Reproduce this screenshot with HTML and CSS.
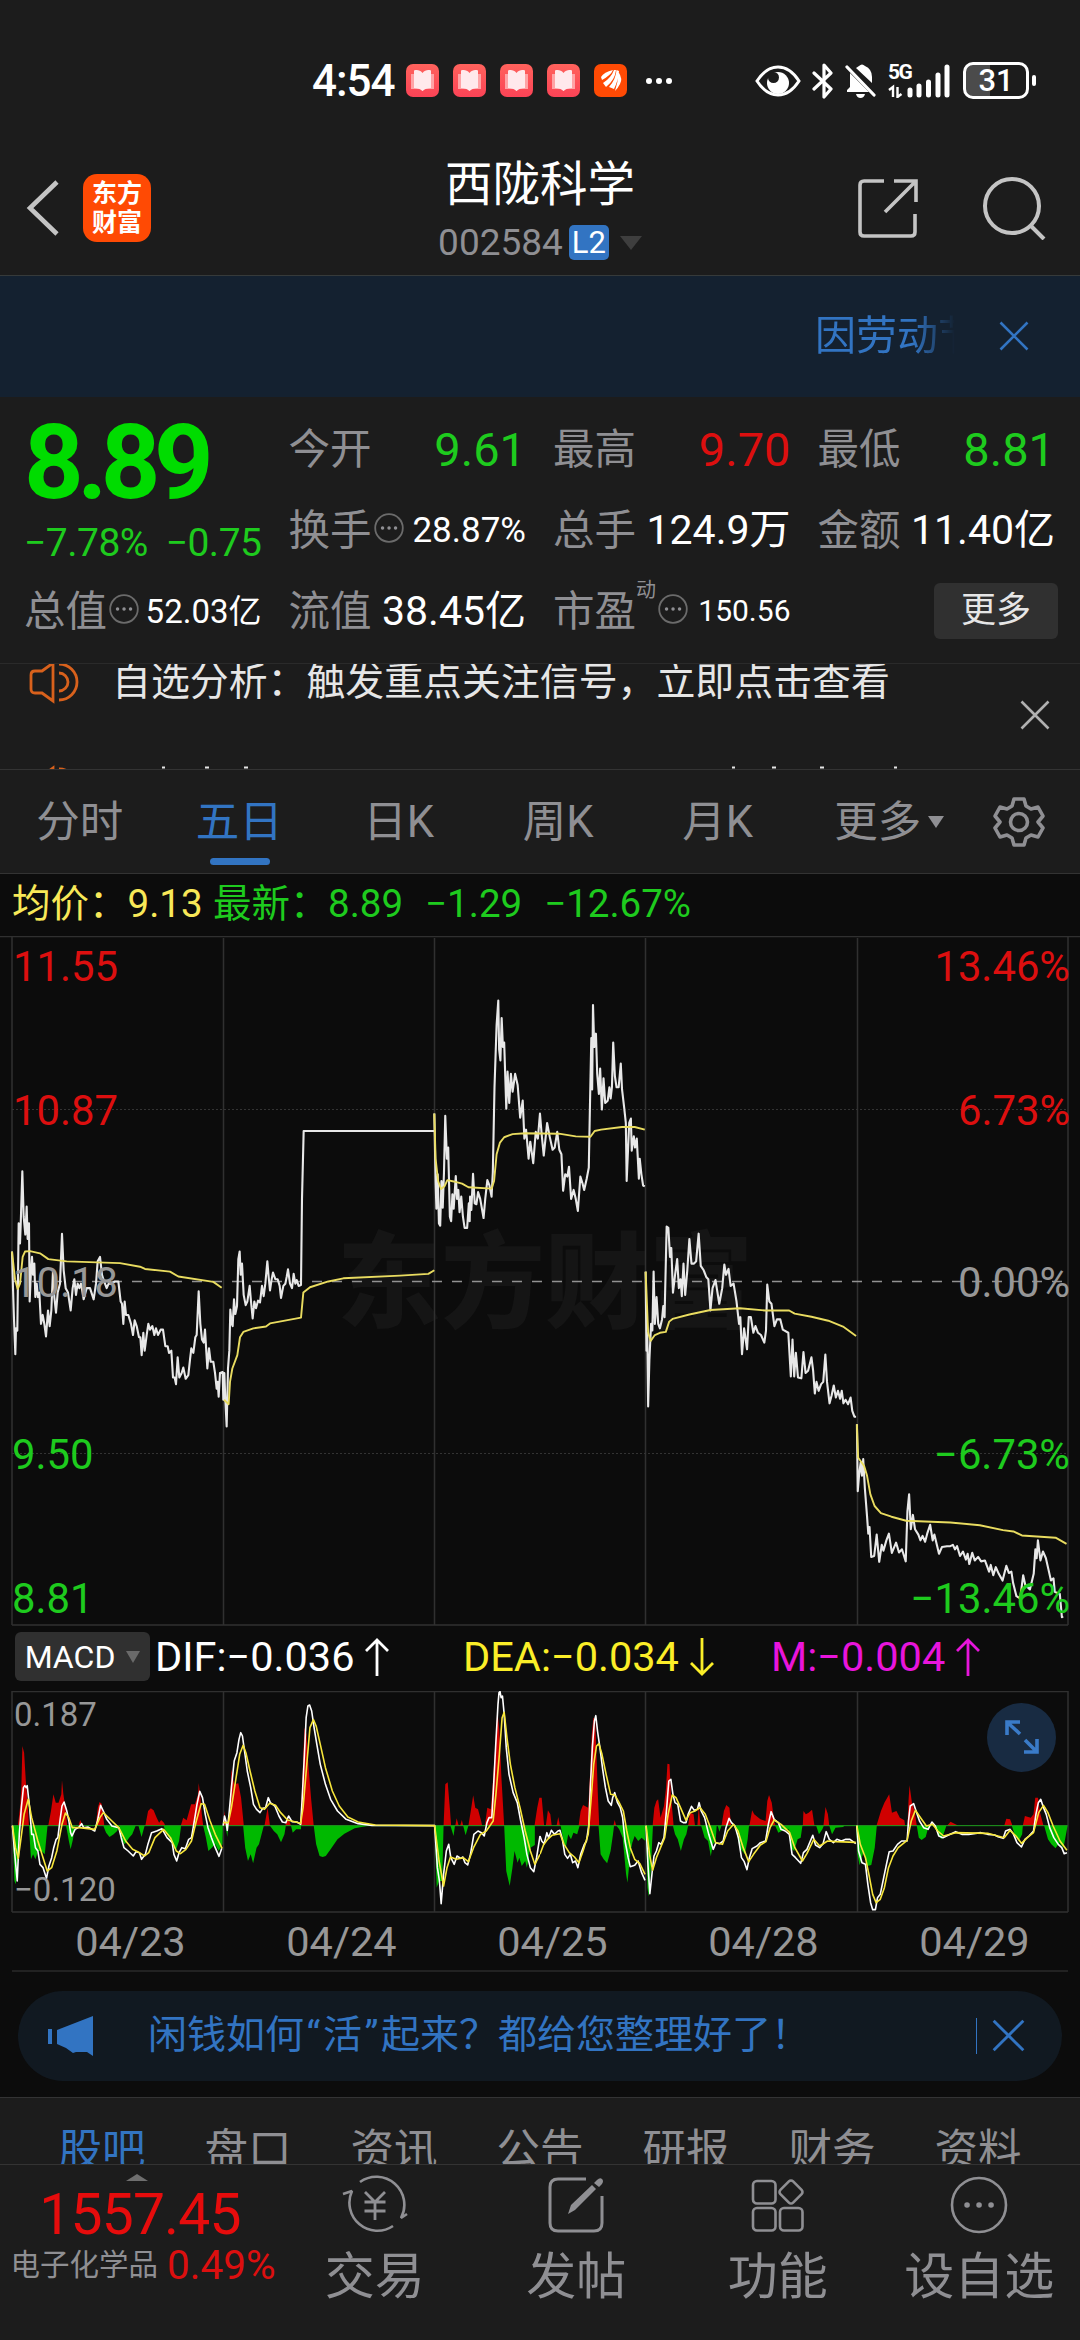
FILE: index.html
```html
<!DOCTYPE html>
<html lang="zh-CN">
<head>
  <meta charset="UTF-8">
  <meta name="viewport" content="width=device-width, initial-scale=1.0">
  <title>西陇科学 002584</title>
  <link rel="stylesheet" href="styles.css">
</head>
<body>
  <svg width="0" height="0" class="defs">
    <defs>
      <linearGradient id="book-bg" x1="0" y1="0" x2="0" y2="1">
        <stop offset="0" stop-color="#ff625c"/>
        <stop offset="1" stop-color="#fb4356"/>
      </linearGradient>
      <symbol id="book" viewBox="0 0 33 33">
        <rect width="33" height="33" rx="7" fill="url(#book-bg)"/>
        <path d="M5 10h23v15h-9l-2.500 2-2.500-2H5z" fill="#ffa3a6"/>
        <path d="M8 6.500c3-1 6-.5 8.500 2.500 2.500-3 5.500-3.500 8.500-2.500V24c-3.500 0-6 .8-8.500 3-2.500-2.200-5-3-8.500-3z" fill="#ffe9ec"/>
      </symbol>
      <symbol id="close" viewBox="0 0 30 30">
        <path d="M1.500 1.500l27 27M28.500 1.500l-27 27" fill="none" stroke="currentColor" stroke-width="2.600"/>
      </symbol>
      <symbol id="info" viewBox="0 0 30 30">
        <circle cx="15" cy="15" r="13.800" fill="none" stroke="#6b6b6b" stroke-width="1.800"/>
        <path d="M8.500 15h.1M15 15h.1M21.500 15h.1" stroke="#8f8f93" stroke-width="3.400" stroke-linecap="round"/>
      </symbol>
      <symbol id="speaker" viewBox="0 0 52 44">
        <path d="M3 15q0-4 4-4h7L25 3v38L14 33H7q-4 0-4-4zM31 4a18 18 0 0 1 0 36M31 13a9 9 0 0 1 0 18" fill="none" stroke="#d8611c" stroke-width="2.800"/>
      </symbol>
      <symbol id="arrow-up" viewBox="0 0 24 38">
        <path d="M12 38V2M1 13L12 2l11 11" fill="none" stroke="currentColor" stroke-width="2.800"/>
      </symbol>
    </defs>
  </svg>

  <div class="status-bar">
    <div class="status-left">
      <span class="clock">4:54</span>
      <svg class="app-icon"><use href="#book"/></svg>
      <svg class="app-icon"><use href="#book"/></svg>
      <svg class="app-icon"><use href="#book"/></svg>
      <svg class="app-icon"><use href="#book"/></svg>
      <svg class="app-icon" viewBox="0 0 33 33">
        <rect width="33" height="33" rx="7" fill="#ff4a04"/>
        <path d="M7 13Q10 8 19 6Q17 11 8 16zM9 19Q17 14 20 6L22 6Q21 16 12 23zM15 23Q22 15 22.500 6L25 7Q24 17 20 25zM21 27Q24 18 24.500 8Q29 15 26 20Q24 24 21 27z" fill="#fff"/>
      </svg>
      <span class="dots"><i></i><i></i><i></i></span>
    </div>
    <div class="status-right">
      <svg width="46" height="32" viewBox="0 0 46 32">
        <path d="M2 16Q11 2 23 2t21 14Q35 30 23 30T2 16z" fill="none" stroke="#fff" stroke-width="3"/>
        <circle cx="23" cy="18" r="11" fill="#fff"/>
        <circle cx="18.500" cy="12.500" r="5.500" fill="#1c1c1c"/>
      </svg>
      <svg width="22" height="36" viewBox="0 0 22 36">
        <path d="M2 10l17 16-7 8V2l7 8L2 26" fill="none" stroke="#fff" stroke-width="3.200" stroke-linejoin="round" stroke-linecap="round"/>
      </svg>
      <svg width="32" height="36" viewBox="0 0 32 36">
        <path d="M14 3Q17 0 20 3Q27 6 27 14V20L11 5zM5 10L24 29H2V27L5 24zM11 31h9q-1 4-4.500 4T11 31z" fill="#fff"/>
        <path d="M2 4l27 28" stroke="#fff" stroke-width="3.200" stroke-linecap="round"/>
      </svg>
      <div class="signal">
        <span>5G</span>
        <svg width="62" height="34" viewBox="0 0 62 34">
          <path d="M5 33V23l-4 3M9.500 23v10l4-3" fill="none" stroke="#fff" stroke-width="2.400"/>
          <path d="M22 26v5M31 22v9M40.500 18v13M50 11v20M59 3v28" stroke="#fff" stroke-width="5" stroke-linecap="round"/>
        </svg>
      </div>
      <div class="battery"><span>31</span></div>
    </div>
  </div>

  <div class="header">
    <div class="header-left">
      <svg width="34" height="56" viewBox="0 0 34 56"><path d="M31 2L4 28l27 26" fill="none" stroke="#c4c4c4" stroke-width="4.600"/></svg>
      <div class="logo">东方<br>财富</div>
    </div>
    <div class="header-title">
      <h1>西陇科学</h1>
      <div class="code">002584<span class="level">L2</span><span class="tri-down"></span></div>
    </div>
    <div class="header-right">
      <svg width="60" height="60" viewBox="0 0 60 60">
        <path d="M26 3H6q-4 0-4 4v47q0 4 4 4h47q4 0 4-4V36M36 3h22v21M58 3L27 34" fill="none" stroke="#c4c4c4" stroke-width="3.600"/>
      </svg>
      <svg width="64" height="64" viewBox="0 0 64 64">
        <circle cx="30" cy="30" r="27" fill="none" stroke="#c4c4c4" stroke-width="4"/>
        <path d="M49 50l13 13" stroke="#c4c4c4" stroke-width="4"/>
      </svg>
    </div>
  </div>

  <div class="notice">
    <div class="notice-text">因劳动节</div>
    <svg class="close"><use href="#close"/></svg>
  </div>

  <div class="quote">
    <div class="price-box">
      <div class="price">8.89</div>
      <div class="change"><span>−7.78%</span><span>−0.75</span></div>
    </div>
    <div class="cell"><label>今开</label><b class="down">9.61</b></div>
    <div class="cell"><label>最高</label><b class="up">9.70</b></div>
    <div class="cell"><label>最低</label><b class="down">8.81</b></div>
    <div class="cell"><label>换手</label><svg class="info"><use href="#info"/></svg><b class="s35">28.87%</b></div>
    <div class="cell"><label>总手</label><b class="s41">124.9万</b></div>
    <div class="cell"><label>金额</label><b class="s41">11.40亿</b></div>
    <div class="cell"><label>总值</label><svg class="info"><use href="#info"/></svg><b class="s33">52.03亿</b></div>
    <div class="cell"><label>流值</label><b class="s41">38.45亿</b></div>
    <div class="cell"><label>市盈</label><sup>动</sup><svg class="info"><use href="#info"/></svg><b class="s30">150.56</b></div>
    <div class="cell cell-more"><button>更多</button></div>
  </div>

  <div class="news">
    <div class="news-list">
      <div class="news-item"><svg class="speaker"><use href="#speaker"/></svg>自选分析：触发重点关注信号，立即点击查看</div>
      <div class="news-item">
        <svg class="speaker"><use href="#speaker"/></svg>
        <svg width="800" height="44" viewBox="0 0 800 44"><path d="M50 2.500h3M93 2.500h4M132 2.500h4M620 2.500h3M660 2.500h4M708 2.500h4M782 2.500h3" stroke="#e6e6e6" stroke-width="2"/></svg>
      </div>
    </div>
    <svg class="close"><use href="#close"/></svg>
  </div>

  <div class="tabs">
    <span>分时</span>
    <span class="active">五日</span>
    <span>日K</span>
    <span>周K</span>
    <span>月K</span>
    <span class="more">更多<i class="tri-down"></i></span>
    <svg width="52" height="52" viewBox="0 0 52 52">
      <path d="M21 3h10l2 7 5 3 7-2 5 9-5 6 5 6-5 9-7-2-5 3-2 7H21l-2-7-5-3-7 2-5-9 5-6-5-6 5-9 7 2 5-3z" fill="none" stroke="#8f8f93" stroke-width="3.600" stroke-linejoin="round"/>
      <circle cx="26" cy="26" r="8.500" fill="none" stroke="#8f8f93" stroke-width="3.600"/>
    </svg>
  </div>

  <div class="chart-area">
    <div class="legend">
      <span class="avg">均价：9.13</span>
      <span class="last">最新：</span><span>8.89</span><span>−1.29</span><span>−12.67%</span>
    </div>

    <svg class="price-chart" width="1080" height="690" viewBox="0 0 1080 690">
      <text class="watermark" x="545" y="384" text-anchor="middle">东方财富</text>
      <path class="grid" d="M0 .5H1080M12 0V689M223.500 2V689M434.500 2V689M645.500 2V689M857.500 2V689M1068 0V689M12 689H1068"/>
      <path class="grid-dot" d="M12 173.500H1068M12 517.500H1068"/>
      <path class="grid-zero" d="M12 345.500H1068"/>

      <!-- 04/23, 04/24 -->
      <svg x="0" y="-5" width="440" height="700" viewBox="0 0 1320 1568" preserveAspectRatio="none">
        <path class="line-price" d="M36,718 39,800 42,870 46,948 48,890 52,895 56,655 60,700 62,660 67,538 71,640 76,680 80,617 83,690 87,655 89,830 93,760 96,730 99,770 103,745 106,820 110,790 114,820 118,810 123,880 128,860 133,880 138,908 144,850 149,885 154,850 159,760 163,820 168,855 173,810 180,790 186,678 191,760 197,800 204,810 212,850 218,800 223,780 228,815 233,790 238,800 243,790 251,825 260,800 270,800 281,825 288,790 293,740 300,730 306,770 310,780 315,790 320,800 326,790 335,790 345,785 355,785 362,830 366,835 370,880 374,830 378,860 385,860 393,880 399,905 404,872 410,885 417,910 421,910 425,950 430,900 434,940 440,905 445,880 450,893 457,885 463,905 468,890 474,905 482,893 489,893 496,930 503,930 507,945 514,940 519,1000 524,1000 528,1015 533,955 538,1000 545,990 550,978 557,1003 565,995 570,960 574,935 580,945 586,910 590,905 596,807 601,880 606,915 611,922 615,893 622,980 627,935 632,965 640,965 645,990 650,1025 653,1010 656,1043 660,990 668,988 670,1050 673,990 676,1050 680,1110 684,980 688,940 691,848 695,880 698,885 702,825 706,858 711,840 715,735 719,718 722,770 726,745 731,815 737,838 742,830 749,795 753,830 758,868 763,830 768,845 774,828 780,832 786,795 791,818 796,790 802,740 806,775 810,805 815,780 819,765 826,780 833,780 839,795 843,822 850,795 856,790 860,775 864,758 870,790 876,800 881,768 886,790 890,782 896,795 903,793 906,600 911,448 1303,448"/>
        <path class="line-avg" d="M36,718 45,780 53,802 60,790 64,760 68,730 75,718 90,717 120,722 145,735 200,740 360,744 420,752 435,757 510,763 535,774 640,786 665,799M672,1050 686,1060 690,1010 697,980 712,950 720,910 730,898 760,890 798,886 810,879 903,866 910,810 930,798 985,785 1030,778 1200,772 1285,768 1303,760"/>
      </svg>
      <!-- 04/25, 04/28, 04/29 -->
      <svg x="420" y="-5" width="660" height="700" viewBox="0 0 1568 1568" preserveAspectRatio="none">
        <path class="line-price" d="M34,409 37,560 39,622 42,545 45,655 48,660 51,560 54,620 57,540 60,414 64,510 67,485 71,640 74,650 77,590 80,622 85,549 88,600 91,580 94,630 98,595 102,640 106,665 112,665 116,610 118,650 119,595 122,625 126,544 130,610 134,612 138,585 143,600 151,643 155,600 160,558 165,570 170,595 173,540 177,350 182,210 186,156 188,265 191,290 194,195 197,260 200,250 205,398 208,315 212,385 216,320 220,360 226,320 232,345 238,418 244,380 248,465 252,445 258,510 262,472 269,520 275,450 280,465 285,409 289,455 294,503 302,430 308,460 315,490 320,485 326,450 331,490 336,500 340,582 345,545 350,550 354,528 359,600 365,580 370,600 375,627 381,550 386,565 390,580 396,555 401,530 404,380 407,240 409,355 411,166 414,260 418,230 421,320 425,365 428,308 432,400 436,330 440,385 446,380 450,350 453,375 456,350 459,250 463,325 467,350 472,350 477,297 480,355 485,395 489,430 491,560 497,430 501,420 503,492 508,460 511,485 515,465 520,555 522,510 526,545 530,570 534,572"/>
        <path class="line-avg" d="M34,409 37,510 43,560 50,578 58,572 65,558 80,561 100,566 115,574 170,577 176,560 182,500 190,474 200,462 220,455 250,453 330,454 370,460 405,461 415,448 430,445 480,439 510,439 534,445"/>
        <path class="line-price" d="M536,763 538,940 540,900 542,1065 545,960 549,880 552,895 555,763 558,880 562,820 566,880 570,890 575,870 578,840 581,865 586,662 590,665 594,730 597,710 601,810 606,770 611,735 615,800 619,780 622,818 626,745 630,815 635,760 640,690 645,745 651,745 656,740 662,678 667,750 674,760 680,775 685,780 690,850 695,800 702,782 711,835 718,800 723,747 727,770 733,757 738,795 745,790 752,830 758,880 761,865 765,948 770,890 777,937 781,865 786,865 792,900 797,885 803,900 810,905 818,922 822,895 825,792 830,830 835,835 842,885 848,870 856,870 862,893 875,900 881,998 885,915 889,998 893,945 898,1000 906,1002 911,943 916,990 922,985 930,955 934,985 938,1036 942,1010 947,1030 953,1015 958,1010 963,949 967,1010 973,1058 978,1040 983,1018 988,1045 993,1030 998,1048 1002,1030 1006,1058 1011,1050 1017,1060 1023,1045 1027,1075 1032,1088 1036,1088"/>
        <path class="line-avg" d="M536,763 542,900 548,918 558,905 570,900 584,898 592,875 600,869 640,859 690,849 760,845 820,850 877,850 890,857 930,864 970,873 1005,886 1036,907"/>
        <path class="line-price" d="M1038,1105 1040,1255 1043,1220 1047,1190 1050,1220 1053,1183 1057,1250 1062,1310 1065,1350 1068,1335 1072,1402 1079,1400 1085,1352 1091,1413 1097,1375 1101,1388 1108,1365 1114,1350 1121,1393 1131,1370 1138,1392 1145,1385 1154,1412 1158,1300 1162,1262 1166,1340 1171,1308 1176,1340 1184,1352 1189,1365 1194,1355 1200,1368 1205,1350 1212,1330 1218,1365 1222,1352 1233,1395 1240,1380 1252,1378 1260,1378 1266,1375 1271,1385 1276,1378 1283,1400 1290,1390 1297,1408 1301,1395 1305,1418 1312,1393 1318,1410 1326,1402 1333,1412 1342,1410 1352,1435 1356,1420 1362,1443 1368,1425 1375,1440 1384,1455 1393,1422 1399,1438 1405,1435 1409,1460 1417,1490 1426,1495 1433,1443 1438,1465 1449,1475 1458,1440 1462,1385 1465,1405 1468,1365 1474,1410 1480,1390 1487,1405 1493,1430 1499,1455 1505,1450 1508,1480 1520,1485 1525,1537 1528,1535"/>
        <path class="line-avg" d="M1038,1105 1041,1180 1045,1185 1055,1198 1062,1220 1070,1262 1080,1288 1095,1304 1120,1312 1155,1321 1260,1325 1330,1331 1385,1342 1410,1345 1430,1354 1510,1359 1536,1373"/>
      </svg>

      <g class="axis">
        <text class="up" x="13" y="45">11.55</text>
        <text class="up" x="13" y="189">10.87</text>
        <text class="flat" x="13" y="361">10.18</text>
        <text class="down" x="12" y="533">9.50</text>
        <text class="down" x="12" y="677">8.81</text>
      </g>
      <g class="axis" text-anchor="end">
        <text class="up" x="1070" y="45">13.46%</text>
        <text class="up" x="1070" y="189">6.73%</text>
        <text class="flat" x="1070" y="361">0.00%</text>
        <text class="down" x="1070" y="533">−6.73%</text>
        <text class="down" x="1070" y="677">−13.46%</text>
      </g>
    </svg>

    <div class="macd-head">
      <button>MACD<i class="tri-down"></i></button>
      <span class="dif">DIF:−0.036<svg class="arrow"><use href="#arrow-up"/></svg></span>
      <span class="dea">DEA:−0.034<svg class="arrow arrow-down"><use href="#arrow-up"/></svg></span>
      <span class="m">M:−0.004<svg class="arrow"><use href="#arrow-up"/></svg></span>
    </div>

    <div class="macd-chart">
      <svg width="1080" height="222" viewBox="0 0 1080 222">
        <path class="grid" d="M12 .5H1068M12 0V221M223.500 0V221M434.500 0V221M645.500 0V221M857.500 0V221M1068 0V221M12 221H1068"/>
        <svg x="0" y="-70" width="540" height="370" viewBox="0 0 1568 1110" preserveAspectRatio="none">
          <path class="bar-up" d="M52,614 58,560 62,500 65,375 70,395 75,480 80,540 84,614zM140,614 148,570 155,520 162,545 170,545 178,520 180,478 184,520 190,560 195,614zM228,614 233,597 240,614zM278,614 284,560 289,543 295,548 299,580 303,614zM422,614 430,570 438,562 446,568 455,590 462,605 468,597 476,605 480,614zM525,614 532,590 542,598 555,550 566,550 575,520 577,486 581,520 586,580 590,614zM648,614 652,570 656,614zM663,614 668,540 672,445 680,490 692,487 700,530 708,614zM768,614 777,560 784,614zM828,614 836,590 845,614zM872,614 878,480 884,320 890,340 896,440 904,540 911,614zM1288,614 1293,490 1300,484 1306,560 1310,614zM1322,614 1326,592 1332,614zM1336,614 1341,597 1345,614zM1360,614 1367,570 1374,523 1380,560 1388,565 1397,600 1400,614zM1408,614 1415,560 1425,565 1430,500 1438,380 1444,265 1450,330 1456,470 1464,614zM1552,614 1560,560 1566,530 1568,530 1568,614z"/>
          <path class="bar-down" d="M36,614 42,780 46,790 52,700 56,614zM84,614 90,715 96,700 103,715 110,690 120,690 130,700 138,614zM192,614 200,660 205,685 212,655 217,614zM300,614 308,635 318,648 330,640 340,630 346,614zM346,614 352,650 362,670 375,650 384,640 394,614zM402,614 411,648 420,614zM475,614 484,640 497,660 510,690 520,660 526,614zM590,614 598,650 605,690 615,680 625,670 635,690 646,670 647,614zM655,614 660,648 663,614zM706,614 712,680 720,720 728,700 735,727 745,680 752,670 766,614zM784,614 795,630 805,640 816,664 826,640 830,614zM845,614 850,635 860,625 874,625 874,614zM911,614 918,670 928,705 937,708 946,705 960,685 980,655 1000,638 1030,622 1070,614zM1262,614 1268,800 1275,780 1284,780 1288,614zM1308,614 1317,645 1321,614zM1345,614 1352,643 1360,614zM1464,614 1470,750 1480,795 1488,740 1494,690 1503,725 1508,710 1515,735 1525,720 1530,740 1540,680 1553,672 1553,614z"/>
          <path class="bar-zero" d="M36 614H1568"/>
          <path class="line-dif" d="M36,614 42,690 50,780 56,640 62,560 68,500 72,494 76,500 79,494 86,560 92,640 97,640 103,680 110,690 116,730 125,740 135,772 142,735 150,710 156,680 163,655 168,650 174,600 180,555 186,543 194,570 200,600 205,635 209,645 218,625 230,618 237,608 243,620 255,618 275,630 283,600 292,553 300,570 310,595 325,615 345,620 352,650 360,680 372,690 387,705 395,692 405,695 411,715 422,700 430,668 440,635 455,630 470,623 485,650 500,665 505,700 513,720 520,695 528,680 538,683 548,655 556,650 565,595 572,550 580,511 588,530 596,580 604,620 614,650 625,680 636,706 644,682M648,614 652,585 656,600 660,628 665,580 672,500 680,420 688,395 694,355 699,335 704,345 710,390 718,450 728,500 736,550 745,565 755,575 763,562 771,560 779,530 785,545 798,555 810,585 820,603 830,605 838,585 848,602 862,603 873,610 877,540 884,400 889,290 894,255 899,252 905,270 912,320 920,370 930,430 945,490 960,535 980,570 1005,595 1040,608 1080,613 1262,614 1270,740 1276,780 1281,848 1288,760 1296,690 1303,670 1309,710 1319,730 1327,705 1338,712 1344,708 1350,725 1358,732 1366,700 1376,640 1388,630 1398,635 1406,645 1414,605 1420,590 1428,590 1433,500 1439,380 1446,250 1449,215 1452,212 1455,230 1459,225 1464,280 1470,380 1478,460 1490,515 1502,545 1512,600 1522,650 1530,700 1540,740 1550,752 1558,710 1568,645"/>
          <path class="line-dea" d="M36,614 45,680 53,712 60,660 70,580 82,535 92,590 110,660 125,710 137,750 150,740 165,690 180,610 190,576 200,590 210,620 230,620 275,625 290,590 300,575 325,600 345,620 365,660 385,685 400,692 420,705 432,695 450,650 475,625 495,650 512,690 524,698 540,685 556,660 570,600 584,548 594,550 610,600 625,640 645,682M648,605 663,605 672,560 684,480 696,400 706,373 714,395 726,450 740,510 755,560 768,565 783,547 800,553 815,575 835,597 873,607 880,560 890,440 900,320 910,296 918,315 930,370 945,440 965,510 985,555 1010,588 1040,603 1090,612 1262,614 1275,720 1288,795 1298,740 1308,708 1325,715 1345,710 1360,722 1375,680 1395,640 1412,630 1432,600 1440,520 1450,400 1458,290 1464,274 1472,350 1482,430 1495,500 1510,560 1525,630 1540,690 1553,730 1568,700"/>
        </svg>
        <svg x="540" y="-70" width="540" height="370" viewBox="0 0 1568 1110" preserveAspectRatio="none">
          <path class="bar-up" d="M0,614 0,530 5,530 10,590 12,614zM17,614 23,568 30,580 34,614zM48,614 53,588 58,614zM112,614 118,570 125,552 140,560 146,450 150,345 155,290 160,295 164,400 168,520 172,614zM213,614 217,597 221,614zM327,614 332,560 338,540 343,535 350,590 360,555 366,500 370,428 376,430 380,520 388,614zM430,614 436,575 446,580 450,614zM457,614 461,555 466,614zM527,614 534,570 541,552 550,560 555,614zM608,614 616,568 622,580 640,595 655,600 660,540 665,522 673,545 680,600 684,614zM763,614 765,570 772,580 780,575 790,566 797,614zM823,614 829,558 836,580 840,614zM977,614 990,570 1000,545 1014,520 1022,575 1035,570 1045,590 1058,598 1060,614zM1067,614 1070,540 1073,493 1080,545 1088,570 1094,614zM1132,614 1138,603 1148,614zM1182,614 1192,602 1215,614zM1348,614 1354,593 1365,595 1372,614zM1402,614 1408,585 1425,590 1433,580 1438,530 1446,530 1452,575 1462,614z"/>
          <path class="bar-down" d="M60,614 68,660 75,680 82,640 90,655 97,635 108,640 115,614zM170,614 176,700 185,715 195,727 205,690 212,640 215,614zM222,614 230,625 240,650 250,760 254,785 262,700 268,665 275,645 285,660 295,650 306,660 306,614zM308,614 312,800 316,827 322,740 328,614zM386,614 392,640 400,655 409,690 418,655 425,640 430,614zM468,614 478,650 488,660 496,706 502,670 510,660 513,614zM516,614 521,632 527,614zM562,614 570,630 580,680 595,700 603,655 607,614zM683,614 692,635 705,628 722,625 728,680 738,690 748,655 757,650 762,614zM802,614 810,640 820,625 824,614zM840,614 848,640 858,620 880,618 884,614zM918,614 922,700 928,733 940,690 950,735 962,732 972,680 978,614zM1094,614 1100,650 1108,657 1120,648 1126,625 1132,614zM1148,614 1155,640 1166,655 1175,630 1180,614zM1370,614 1378,640 1390,660 1400,640 1402,614zM1464,614 1475,655 1485,670 1497,682 1508,665 1520,680 1532,614z"/>
          <path class="bar-zero" d="M0 614H1532"/>
          <path class="line-dif" d="M0,645 5,660 12,668 20,635 25,650 33,628 42,640 52,630 58,628 65,655 72,700 80,712 88,700 95,725 103,720 110,740 118,700 128,672 135,660 142,610 146,500 152,380 158,300 162,284 167,330 174,380 182,445 190,500 198,540 207,553 211,530 217,515 225,545 233,560 240,590 247,660 256,710 262,737 275,733 285,720 295,755 305,778M308,614 314,740 319,818 326,750 331,705 338,690 345,665 352,670 360,650 368,560 374,480 380,475 386,520 392,545 400,550 408,600 416,605 424,605 430,580 440,556 448,568 457,565 462,545 468,570 478,590 490,640 503,685 511,665 522,668 532,660 540,620 549,592 556,605 566,615 576,650 585,710 593,722 601,746 608,710 616,683 630,675 640,665 655,660 663,610 671,572 680,595 692,605 700,625 712,630 724,640 732,700 742,710 757,727 765,695 775,685 785,660 792,643 800,672 812,680 822,668 831,632 840,655 852,665 862,655 875,660 888,655 900,655 917,668M920,614 925,690 935,725 945,730 952,790 960,845 966,866 974,866 980,830 988,820 998,770 1006,730 1014,692 1025,690 1038,670 1050,660 1066,660 1070,600 1075,555 1085,548 1092,570 1102,600 1114,620 1127,625 1138,603 1148,615 1158,645 1170,650 1185,643 1207,632 1225,640 1245,640 1280,635 1300,640 1320,642 1330,647 1345,652 1352,630 1365,625 1375,640 1385,665 1398,678 1408,655 1420,645 1433,630 1440,580 1447,545 1454,535 1462,560 1470,580 1480,620 1492,650 1505,670 1515,680 1522,698 1530,695"/>
          <path class="line-dea" d="M0,700 10,672 22,655 35,643 58,638 70,670 85,695 100,708 113,725 125,690 140,640 148,540 156,430 164,375 171,368 180,400 192,460 205,520 217,522 230,545 242,570 252,630 262,680 275,715 290,728 305,760M308,614 318,700 327,748 338,710 350,680 362,650 372,580 384,522 395,530 408,560 424,598 436,575 450,570 465,560 480,580 495,620 510,665 530,670 545,630 562,610 575,630 590,680 606,722 620,700 640,672 656,662 668,620 680,597 700,610 725,635 740,680 762,720 775,698 795,655 812,675 835,660 860,662 917,664M920,614 930,670 945,710 955,760 966,820 976,845 988,835 1000,800 1012,740 1025,705 1040,680 1066,658 1078,600 1090,568 1105,590 1122,615 1140,610 1155,630 1172,645 1207,635 1300,637 1348,650 1365,628 1382,645 1398,667 1415,650 1433,635 1448,575 1462,553 1475,575 1490,615 1510,660 1530,688"/>
        </svg>
        <text class="macd-label" x="14" y="35">0.187</text>
        <text class="macd-label" x="14" y="210">−0.120</text>
      </svg>
      <div class="expand">
        <svg width="34" height="34" viewBox="0 0 34 34"><path d="M2 15V2h13M2 2l13 12M32 19v13H19M32 32L20 20" fill="none" stroke="#3a7bc8" stroke-width="3.600"/></svg>
      </div>
    </div>

    <div class="dates">
      <span>04/23</span><span>04/24</span><span>04/25</span><span>04/28</span><span>04/29</span>
    </div>

    <div class="promo">
      <svg width="46" height="40" viewBox="0 0 46 40"><path d="M0 13h4v15H0zM9 14L45 0v40l-6-4h-11l-3 1-7-5-9-4z" fill="#3274c2"/></svg>
      <p>闲钱如何<span class="q">“</span>活<span class="q">”</span>起来？都给您整理好了！</p>
      <i class="divider"></i>
      <svg class="close"><use href="#close"/></svg>
    </div>
  </div>

  <div class="sub-tabs">
    <span class="active">股吧</span><span>盘口</span><span>资讯</span><span>公告</span><span>研报</span><span>财务</span><span>资料</span>
  </div>

  <div class="bottom-bar">
    <div class="index-box">
      <i class="tri-up"></i>
      <div class="index-value">1557.45</div>
      <div class="index-name">电子化学品<span>0.49%</span></div>
    </div>
    <div class="action">
      <svg width="66" height="60" viewBox="0 0 66 60">
        <path d="M18 7a28 28 0 0 1 41 36l6-4M51 51A28 28 0 0 1 10 16l-9 3" fill="none" stroke="#8f8f93" stroke-width="2.600" stroke-linejoin="bevel"/>
        <path d="M23 17l10 10 10-10M33 27v18M22.500 27h21M22.500 36h21" fill="none" stroke="#8f8f93" stroke-width="2.800"/>
      </svg>
      <span>交易</span>
    </div>
    <div class="action">
      <svg width="56" height="60" viewBox="0 0 56 60">
        <path d="M38 4H10q-8 0-8 8v36q0 8 8 8h36q8 0 8-8V21" fill="none" stroke="#8f8f93" stroke-width="3"/>
        <path d="M20 39l3-9 21-20 4 4-21 21zM46 8l3-3q3-3 5-1t0 5l-3 3z" fill="#8f8f93"/>
      </svg>
      <span>发帖</span>
    </div>
    <div class="action">
      <svg width="54" height="60" viewBox="0 0 54 60">
        <g fill="none" stroke="#8f8f93" stroke-width="2.600">
          <rect x="2" y="6" width="22.500" height="22.500" rx="4"/>
          <rect x="2" y="33" width="22.500" height="22.500" rx="4"/>
          <rect x="29" y="33" width="22.500" height="22.500" rx="4"/>
          <rect x="31" y="8" width="18" height="18" rx="3" transform="rotate(45 40 17)"/>
        </g>
      </svg>
      <span>功能</span>
    </div>
    <div class="action">
      <svg width="58" height="60" viewBox="0 0 58 60">
        <circle cx="29" cy="30" r="27" fill="none" stroke="#8f8f93" stroke-width="2.600"/>
        <path d="M17 30h.1M29 30h.1M41 30h.1" stroke="#8f8f93" stroke-width="5.500" stroke-linecap="round"/>
      </svg>
      <span>设自选</span>
    </div>
  </div>
</body>
</html>
```
FILE: styles.css
```css
* {
  box-sizing: border-box;
}
body {
  margin: 0;
  width: 1080px;
  height: 2340px;
  overflow: hidden;
  background: #1c1c1c;
  color: #8f8f93;
  font-family: Roboto, "Noto Sans CJK SC", sans-serif;
  line-height: 1;
  display: flex;
  flex-direction: column;
}
svg {
  display: block;
  flex: none;
}
i {
  font-style: normal;
}
button {
  border: none;
  padding: 0;
  font-family: inherit;
  line-height: 1;
  background: #303030;
  color: #e6e6e6;
  border-radius: 6px;
}
.defs {
  position: absolute;
}
.up { color: #dc0f0f; fill: #dc0f0f; }
.down { color: #1ecb1e; fill: #1ecb1e; }
.flat { fill: #979797; }
.close {
  width: 30px;
  height: 30px;
}
.tri-down {
  width: 0;
  height: 0;
  border: 11px solid transparent;
  border-top: 14px solid #3e3e3e;
  border-bottom: none;
}

/* status bar */
.status-bar {
  height: 130px;
  padding: 61px 43px 0 312px;
  display: flex;
  justify-content: space-between;
  align-items: flex-start;
  color: #fff;
}
.status-left, .status-right {
  display: flex;
  align-items: center;
  height: 39px;
}
.clock {
  font-size: 44px;
  font-weight: 500;
  letter-spacing: -1px;
  width: 94px;
}
.app-icon {
  width: 33px;
  height: 33px;
  margin-right: 14px;
}
.dots {
  display: flex;
  gap: 4px;
  margin-left: 5px;
}
.dots i {
  width: 6px;
  height: 6px;
  border-radius: 50%;
  background: #fff;
}
.status-right {
  gap: 11px;
}
.signal {
  position: relative;
  margin-right: 2px;
}
.signal span {
  position: absolute;
  top: -2px;
  left: 0;
  font-size: 21px;
  font-weight: 700;
  letter-spacing: -1.500px;
}
.battery {
  position: relative;
  width: 66px;
  height: 37px;
  margin-right: 8px;
  border: 3px solid #fff;
  border-radius: 10px;
  background: linear-gradient(90deg, #4b4b4b 40%, transparent 40%);
  text-align: center;
  font-size: 31px;
  font-weight: 500;
}
.battery::after {
  content: "";
  position: absolute;
  right: -10px;
  top: 10px;
  width: 4px;
  height: 11px;
  border-radius: 2px;
  background: #fff;
}

/* header */
.header {
  height: 146px;
  padding: 0 34px 0 26px;
  display: grid;
  grid-template-columns: 300px 1fr 300px;
  border-bottom: 1px solid #363a3a;
}
.header-left {
  display: flex;
  align-items: center;
  gap: 23px;
  height: 157px;
}
.logo {
  width: 68px;
  height: 68px;
  border-radius: 14px;
  background: #ff4a04;
  color: #fff;
  font-size: 25px;
  font-weight: 700;
  line-height: 29px;
  padding-top: 5px;
  text-align: center;
}
.header-title {
  padding: 32px 0 0 8px;
  margin: 0 -20px;
  text-align: center;
}
.header-title h1 {
  margin: 0;
  font-size: 47.500px;
  font-weight: 400;
  color: #fff;
}
.code {
  display: flex;
  align-items: center;
  justify-content: center;
  margin-top: 15px;
  font-size: 37px;
}
.level {
  width: 40px;
  height: 35px;
  margin: 0 11px 0 6px;
  border-radius: 5px;
  background: #3274c2;
  color: #fff;
  font-size: 31px;
  line-height: 36px;
}
.header-right {
  display: flex;
  align-items: center;
  justify-content: flex-end;
  gap: 64px;
  height: 157px;
}

/* notice */
.notice {
  height: 121px;
  padding: 0 51px 0 815px;
  background: #142130;
  color: #3274c2;
  display: flex;
  align-items: center;
  justify-content: space-between;
}
.notice-text {
  width: 140px;
  overflow: hidden;
  white-space: nowrap;
  font-size: 41px;
  line-height: 50px;
  -webkit-mask-image: linear-gradient(90deg, #000 70%, transparent);
  mask-image: linear-gradient(90deg, #000 70%, transparent);
}

/* quote */
.quote {
  height: 267px;
  padding: 12px 25px 0 24px;
  display: grid;
  grid-template-columns: repeat(4, 237.500px);
  grid-template-rows: repeat(3, 81px);
  column-gap: 27px;
  border-bottom: 1px solid #2a2a2a;
}
.price-box {
  grid-row: span 2;
  color: #00dc00;
}
.price {
  margin-top: 4px;
  font-size: 104px;
  font-weight: 700;
  letter-spacing: -6.500px;
  line-height: 100px;
}
.change {
  display: flex;
  justify-content: space-between;
  margin-top: 11px;
  color: #1ecb1e;
  font-size: 39px;
  letter-spacing: -.5px;
}
.cell {
  display: flex;
  align-items: center;
  white-space: nowrap;
}
.cell label {
  font-size: 41.500px;
}
.cell b {
  margin-left: auto;
  font-size: 47px;
  font-weight: 400;
}
.cell b[class^="s"] {
  color: #fff;
}
.cell .s41 { font-size: 41px; }
.cell .s35 { font-size: 35px; }
.cell .s33 { font-size: 33px; }
.cell .s30 { font-size: 30px; }
.cell sup {
  font-size: 20px;
  align-self: flex-start;
  margin-top: 9px;
}
.info {
  width: 30px;
  height: 30px;
  margin: -4px 0 0 2px;
}
.cell-more {
  justify-content: flex-end;
}
.cell-more button {
  width: 124px;
  height: 56px;
  margin-right: -3px;
  padding-bottom: 2px;
  font-size: 35px;
}

/* news */
.news {
  height: 106px;
  padding: 0 30px 0 28px;
  display: flex;
  justify-content: space-between;
  align-items: center;
  border-bottom: 1px solid #333;
}
.news-list {
  height: 105px;
  overflow: hidden;
}
.news-item {
  height: 105px;
  padding-bottom: 68px;
  display: flex;
  align-items: center;
  gap: 32px;
  font-size: 38.900px;
  color: #e6e6e6;
}
.speaker {
  width: 52px;
  height: 44px;
}
.news .close {
  color: #b0b0b0;
  margin-bottom: 2px;
}

/* period tabs */
.tabs {
  height: 104px;
  padding-top: 2px;
  display: grid;
  grid-template-columns: repeat(6, 159.500px) 1fr;
  align-items: center;
  justify-items: center;
  font-size: 43.500px;
  border-bottom: 1px solid #333;
}
.tabs .active {
  position: relative;
  color: #3274c2;
}
.tabs .active::after {
  content: "";
  position: absolute;
  left: 14px;
  top: 57px;
  width: 60px;
  height: 7px;
  border-radius: 4px;
  background: #3274c2;
}
.tabs .more {
  display: flex;
  align-items: center;
  gap: 7px;
  padding-left: 24px;
}
.tabs .tri-down {
  border-width: 12px 8px 0;
  border-top-color: #8f8f93;
}

/* charts */
.chart-area {
  height: 1224px;
  background: #0c0c0c;
}
.legend {
  height: 62px;
  padding-left: 12px;
  display: flex;
  align-items: center;
  gap: 22px;
  font-size: 38.500px;
  color: #1ecb1e;
}
.legend .avg {
  width: 201px;
  margin-right: -22px;
  color: #f8e858;
  white-space: nowrap;
}
.legend .last {
  width: 93px;
  white-space: nowrap;
}
.grid {
  fill: none;
  stroke: #303030;
  stroke-width: 1.500;
}
.grid-dot {
  stroke: #333;
  stroke-dasharray: 2 2;
}
.grid-zero {
  stroke: #929292;
  stroke-width: 1.300;
  stroke-dasharray: 10 10;
}
.watermark {
  font-size: 104px;
  font-weight: 900;
  fill: #151515;
}
.line-price, .line-avg, .line-dif, .line-dea {
  fill: none;
  stroke: #e8e8e8;
  stroke-width: 2.100;
  stroke-linejoin: round;
  vector-effect: non-scaling-stroke;
}
.line-avg {
  stroke: #e9dc60;
  stroke-width: 1.900;
}
.axis {
  font-size: 41.800px;
}
.macd-head {
  height: 65px;
  padding: 0 0 3px 15px;
  display: grid;
  grid-template-columns: 140px 308px 308px 1fr;
  align-items: center;
  font-size: 41.500px;
}
.macd-head button {
  width: 135px;
  height: 49px;
  display: flex;
  align-items: center;
  justify-content: center;
  gap: 11px;
  font-size: 32px;
  color: #fff;
}
.macd-head .tri-down {
  border-width: 12px 7px 0;
  border-top-color: #6a6a6a;
}
.macd-head span {
  display: flex;
  align-items: center;
  gap: 11px;
}
.arrow {
  width: 24px;
  height: 38px;
}
.arrow-down {
  transform: rotate(180deg);
}
.dif { color: #fff; }
.dea { color: #fbee28; }
.m { color: #e815dc; }
.macd-chart {
  position: relative;
}
.bar-up { fill: #d00000; }
.bar-down { fill: #00b900; }
.bar-zero {
  stroke: #1fa01f;
  vector-effect: non-scaling-stroke;
}
.line-dif, .line-dea {
  stroke: #fff;
  stroke-width: 1.600;
}
.line-dea {
  stroke: #f7e63b;
}
.macd-label {
  font-size: 33px;
  fill: #979797;
}
.expand {
  position: absolute;
  left: 987px;
  top: 12px;
  width: 69px;
  height: 69px;
  border-radius: 50%;
  background: #182b42;
  display: flex;
  align-items: center;
  justify-content: center;
}
.dates {
  height: 59px;
  margin: 0 12px;
  padding: 2px 0 0 13px;
  display: grid;
  grid-template-columns: repeat(5, 211px);
  align-items: center;
  text-align: center;
  font-size: 41.500px;
  color: #979797;
  border-bottom: 2px solid #222;
}
.promo {
  height: 90px;
  margin: 19px 18px 0;
  padding: 0 37px 0 30px;
  border-radius: 45px;
  background: #111921;
  color: #3274c2;
  display: flex;
  align-items: center;
}
.promo p {
  margin: 0 auto 0 54px;
  font-size: 39px;
}
.promo .q {
  display: inline-block;
  width: 19px;
  text-align: center;
}
.divider {
  width: 1px;
  height: 36px;
  margin-right: 15px;
  background: #3274c2;
}
.promo .close {
  width: 33px;
  height: 33px;
}

/* bottom */
.sub-tabs {
  height: 68px;
  padding: 31px 0 0 29px;
  overflow: hidden;
  display: grid;
  grid-template-columns: repeat(7, 146px);
  text-align: center;
  font-size: 43.500px;
  border-top: 1px solid #333;
  border-bottom: 1px solid #333;
}
.sub-tabs .active {
  color: #3274c2;
}
.bottom-bar {
  height: 175px;
  display: grid;
  grid-template-columns: 274px repeat(4, 201.500px);
}
.index-box {
  display: flex;
  flex-direction: column;
  align-items: center;
  padding-top: 9px;
  color: #e60c0c;
}
.tri-up {
  border: 11px solid transparent;
  border-bottom: 7px solid #6f6f6f;
  border-top: none;
}
.index-value {
  margin: 5px 0 0 6px;
  font-size: 57px;
  letter-spacing: -.8px;
}
.index-name {
  display: flex;
  align-items: center;
  gap: 9px;
  margin: 2px 0 0 12px;
  font-size: 29.500px;
  color: #8f8f93;
  white-space: nowrap;
}
.index-name span {
  font-size: 40.500px;
  color: #dc0f0f;
}
.action {
  display: flex;
  flex-direction: column;
  align-items: center;
  padding-top: 10px;
  font-size: 50px;
}
.action span {
  margin-top: 17px;
}
```
